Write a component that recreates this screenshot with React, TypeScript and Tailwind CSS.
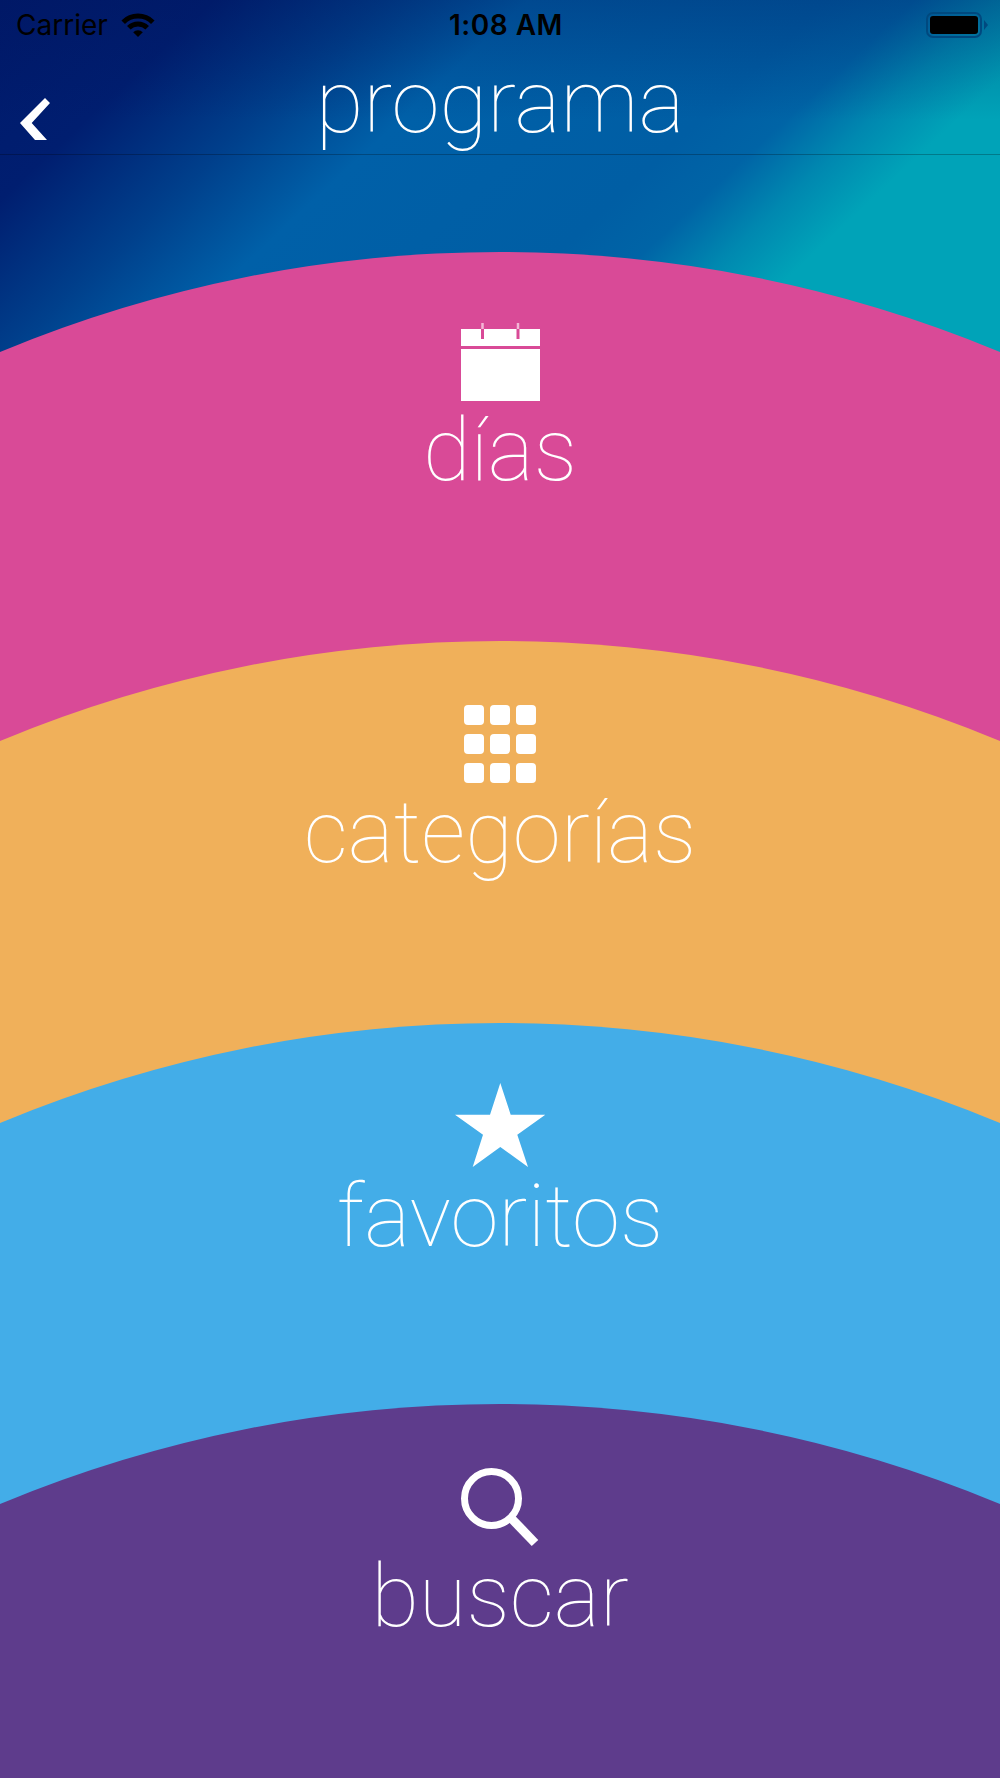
import type { ReactNode } from "react";

const roboto = "font-['Roboto',sans-serif]";

function WifiIcon() {
    return (
        <svg width="34" height="24" viewBox="0 0 34 24" className="block">
            <path d="M2.200 9.200a21 21 0 0 1 29.600 0M7.800 14.800a13 13 0 0 1 18.400 0" fill="none" stroke="#000" strokeWidth="5" />
            <path d="M17 24l-4.800-4.800a6.800 6.800 0 0 1 9.600 0z" fill="#000" />
        </svg>
    );
}

function CalendarIcon() {
    return (
        <svg width="79" height="78" viewBox="0 0 79 78" className="block">
            <path d="M0 6h79v17H0zM0 26h79v52H0z" fill="#fff" />
            <path d="M21.500 0v6M57 0v6" stroke="#f3b6d6" strokeWidth="2.500" />
            <path d="M21.500 6v10M57 6v10" stroke="#d94a97" strokeWidth="3" />
        </svg>
    );
}

function GridIcon() {
    return (
        <div className="grid grid-cols-[20px_20px_20px] gap-x-[6px] gap-y-[9px]">
            {Array.from({ length: 9 }).map((_, i) => (
                <div key={i} className="h-5 w-5 rounded-[4px] bg-white" />
            ))}
        </div>
    );
}

function StarIcon() {
    return (
        <svg width="91" height="84" viewBox="0 0 91 84" className="block">
            <path d="M45.300 0L55.700 31.700H90.300L62.300 51.700L73 84L45.300 64L17.700 84L28 51.700L0 31.700H35z" fill="#fff" />
        </svg>
    );
}

function SearchIcon() {
    return (
        <svg width="78" height="79" viewBox="0 0 78 79" className="block">
            <circle cx="30.500" cy="30.500" r="27" fill="none" stroke="#fff" strokeWidth="7" />
            <path d="M50 50l24 25" stroke="#fff" strokeWidth="9" />
        </svg>
    );
}

function Band({ label, className, children }: { label: string; className: string; children: ReactNode }) {
    return (
        <section className={`relative flex flex-col items-center [clip-path:circle(1300px_at_50%_1300px)] ${className}`}>
            {children}
            <span className={`${roboto} mt-[3px] text-[87px] leading-[92px] font-thin text-white`}>{label}</span>
        </section>
    );
}

export default function App() {
    return (
        <div className="relative h-[1778px] w-[1000px] overflow-hidden">
            {/* blurred photo behind the header */}
            <div className="absolute inset-x-0 top-0 h-[400px] bg-[linear-gradient(to_bottom,rgba(0,20,90,0.3),rgba(0,20,90,0)_120px),linear-gradient(137deg,#001a6c_0%,#001e70_15%,#00408c_27%,#0060a8_37%,#005ea4_58%,#0064a6_64%,#0088b0_70%,#00a3b8_76%,#00a3b8_100%)]" />

            <header className="relative h-[155px] border-b border-black/25">
                <div className="relative flex h-[50px] items-center justify-between pr-3 pl-4 font-['Inter',sans-serif] text-black">
                    <div className="flex w-[200px] items-center gap-[13px]">
                        <span className="text-[28px] leading-none">Carrier</span>
                        <WifiIcon />
                    </div>
                    <span className="pl-2 text-[28px] leading-none font-semibold tracking-[0.5px]">1:08 AM</span>
                    <div className="flex w-[200px] items-center justify-end gap-[2px]">
                        <div className="rounded-[7px] border-2 border-[#00497f] p-[2px]">
                            <div className="h-[18px] w-12 rounded-[3px] bg-black" />
                        </div>
                        <div className="h-[10px] w-1 [clip-path:polygon(0_0,100%_50%,0_100%)] bg-[#00497f]" />
                    </div>
                </div>
                <div className="relative flex h-[104px] justify-center">
                    <svg width="30" height="42" viewBox="0 0 30 42" className="absolute top-[48px] left-5">
                        <path d="M0 25L25 0L30 5L11.700 25L27 42H15z" fill="#fff" />
                    </svg>
                    <span className={`${roboto} text-[87px] leading-[104px] font-thin text-white`}>programa</span>
                </div>
            </header>

            <main className="relative pt-[97px]">
                <div className="h-[389px]">
                    <Band label="días" className="h-[500px] bg-[#d94a97] pt-[71px]"><CalendarIcon /></Band>
                </div>
                <div className="h-[382px]">
                    <Band label="categorías" className="h-[500px] bg-[#f0b05a] pt-16"><GridIcon /></Band>
                </div>
                <div className="h-[381px]">
                    <Band label="favoritos" className="h-[500px] bg-[#43ade8] pt-[60px]"><StarIcon /></Band>
                </div>
                <div className="h-[374px]">
                    <Band label="buscar" className="h-[374px] bg-[#5e3c8c] pt-16"><SearchIcon /></Band>
                </div>
            </main>
        </div>
    );
}
